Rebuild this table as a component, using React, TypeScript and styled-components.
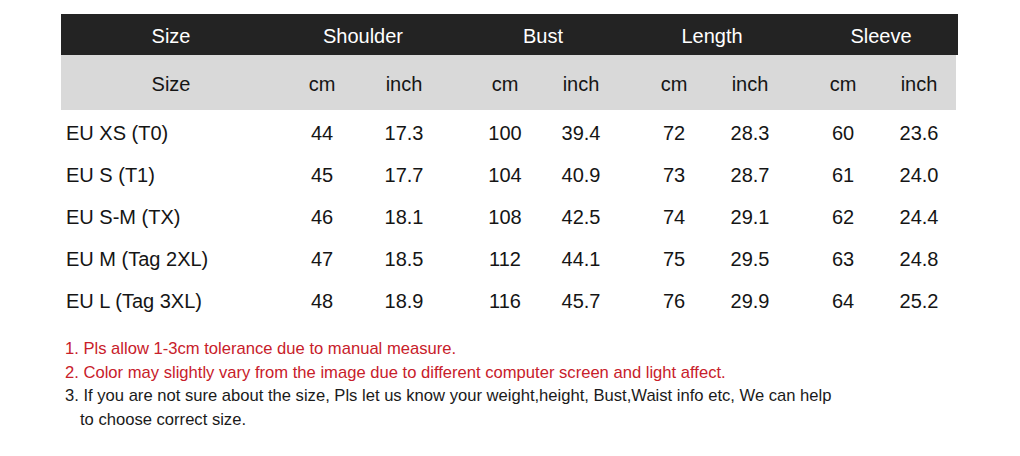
import React from "react";
import styled, { createGlobalStyle } from "styled-components";

const GlobalStyle = createGlobalStyle`
  html, body {
    margin: 0;
    padding: 0;
    background: #ffffff;
  }
  body {
    font-family: "Liberation Sans", Arial, sans-serif;
  }
`;

const Page = styled.div`
  width: 1020px;
  height: 456px;
  padding: 14px 0 0 61px;
  box-sizing: border-box;
  background: #fff;
  overflow: hidden;
`;

const Table = styled.div`
  width: 897px;
  display: flex;
  flex-direction: column;
`;

const Row = styled.div<{ $variant: "head" | "sub" | "body" }>`
  display: flex;
  align-items: center;
  box-sizing: border-box;
  font-size: 20px;
  height: ${(p) => (p.$variant === "head" ? "41px" : p.$variant === "sub" ? "55px" : "42px")};
  padding-top: ${(p) => (p.$variant === "body" ? "0" : "4px")};
  background: ${(p) =>
    p.$variant === "head" ? "#232323" : p.$variant === "sub" ? "#d9d9d9" : "transparent"};
  color: ${(p) => (p.$variant === "head" ? "#ffffff" : "#151515")};
  width: ${(p) => (p.$variant === "sub" ? "895px" : "897px")};
`;

const BodyRows = styled.div`
  padding-top: 2px;
  display: flex;
  flex-direction: column;
`;

const SizeCell = styled.div<{ $left?: boolean }>`
  width: 220px;
  flex: none;
  text-align: ${(p) => (p.$left ? "left" : "center")};
  padding-left: ${(p) => (p.$left ? "5px" : "0")};
  box-sizing: border-box;
`;

const Group = styled.div<{ $w: number; $ml: number }>`
  display: grid;
  grid-template-columns: ${(p) => `${p.$w}px ${p.$w}px`};
  margin-left: ${(p) => p.$ml}px;
  flex: none;
`;

const GroupLabel = styled.div`
  grid-column: 1 / span 2;
  text-align: center;
`;

const Cell = styled.div`
  text-align: center;
`;

const Notes = styled.div`
  margin-top: 15px;
  padding-left: 4px;
  font-size: 16.6px;
  line-height: 23.7px;
`;

const Note = styled.div<{ $red?: boolean }>`
  color: ${(p) => (p.$red ? "#c8202a" : "#1a1a1a")};
`;

const Indent = styled.span`
  display: block;
  padding-left: 15px;
`;

const groups = [
  { name: "Shoulder", w: 82, ml: 0 },
  { name: "Bust", w: 76, ml: 22 },
  { name: "Length", w: 76, ml: 17 },
  { name: "Sleeve", w: 76, ml: 17 },
];

const data: [string, string[]][] = [
  ["EU XS (T0)", ["44", "17.3", "100", "39.4", "72", "28.3", "60", "23.6"]],
  ["EU S (T1)", ["45", "17.7", "104", "40.9", "73", "28.7", "61", "24.0"]],
  ["EU S-M (TX)", ["46", "18.1", "108", "42.5", "74", "29.1", "62", "24.4"]],
  ["EU M (Tag 2XL)", ["47", "18.5", "112", "44.1", "75", "29.5", "63", "24.8"]],
  ["EU L (Tag 3XL)", ["48", "18.9", "116", "45.7", "76", "29.9", "64", "25.2"]],
];

export default function App() {
  return (
    <Page>
      <GlobalStyle />
      <Table>
        <Row $variant="head">
          <SizeCell>Size</SizeCell>
          {groups.map((g) => (
            <Group key={g.name} $w={g.w} $ml={g.ml}>
              <GroupLabel>{g.name}</GroupLabel>
            </Group>
          ))}
        </Row>
        <Row $variant="sub">
          <SizeCell>Size</SizeCell>
          {groups.map((g) => (
            <Group key={g.name} $w={g.w} $ml={g.ml}>
              <Cell>cm</Cell>
              <Cell>inch</Cell>
            </Group>
          ))}
        </Row>
        <BodyRows>
          {data.map(([label, vals]) => (
            <Row key={label} $variant="body">
              <SizeCell $left>{label}</SizeCell>
              {groups.map((g, i) => (
                <Group key={g.name} $w={g.w} $ml={g.ml}>
                  <Cell>{vals[i * 2]}</Cell>
                  <Cell>{vals[i * 2 + 1]}</Cell>
                </Group>
              ))}
            </Row>
          ))}
        </BodyRows>
      </Table>
      <Notes>
        <Note $red>1. Pls allow 1-3cm tolerance due to manual measure.</Note>
        <Note $red>
          2. Color may slightly vary from the image due to different computer screen and light affect.
        </Note>
        <Note>
          3. If you are not sure about the size, Pls let us know your weight,height, Bust,Waist info etc, We can help
          <Indent>to choose correct size.</Indent>
        </Note>
      </Notes>
    </Page>
  );
}
